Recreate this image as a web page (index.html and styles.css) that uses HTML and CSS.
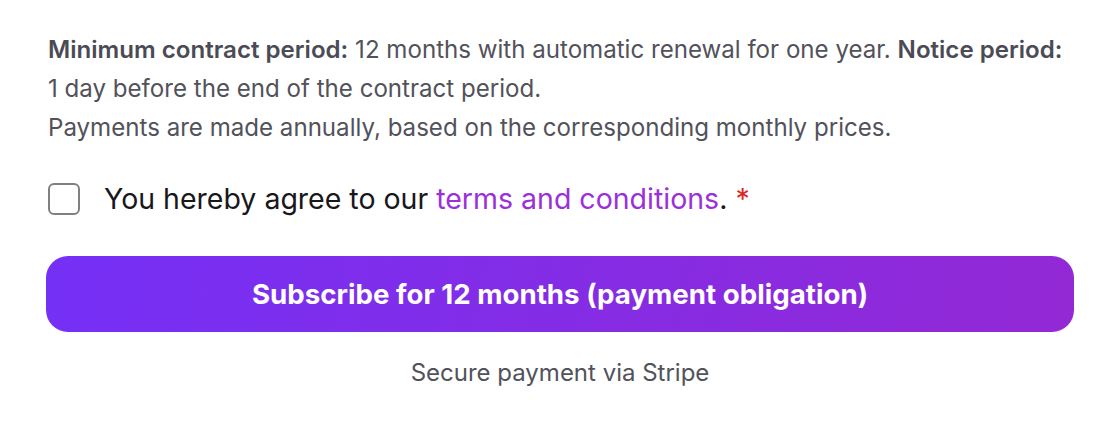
FILE: index.html
```html
<!DOCTYPE html>
<html lang="en">
<head>
    <meta charset="UTF-8">
    <meta name="viewport" content="width=device-width, initial-scale=1.0">
    <title>Subscribe</title>
    <link rel="stylesheet" href="styles.css">
</head>
<body>
    <div class="checkout">
        <div class="contract-info">
            <p><strong>Minimum contract period:</strong> 12 months with automatic renewal for one year. <strong>Notice period:</strong> 1 day before the end of the contract period.</p>
            <p>Payments are made annually, based on the corresponding monthly prices.</p>
        </div>

        <label class="agree">
            <input type="checkbox" class="agree-box">
            <span>You hereby agree to our <a href="#">terms and conditions</a>. <span class="required">*</span></span>
        </label>

        <button class="subscribe-btn">Subscribe for 12 months (payment obligation)</button>

        <p class="secure-note">Secure payment via Stripe</p>
    </div>
</body>
</html>
```

FILE: styles.css
```css
* {
    margin: 0;
    padding: 0;
    box-sizing: border-box;
}

body {
    font-family: 'Inter', 'Noto Sans', sans-serif;
    background-color: #fff;
    color: #52525b;
}

.checkout {
    width: 1028px;
    margin: 0 0 0 46px;
    padding-top: 30px;
    display: flex;
    flex-direction: column;
}

.contract-info {
    padding-left: 2px;
    font-size: 24.1px;
    line-height: 39px;
    color: #52525b;
}

.contract-info strong {
    font-weight: 600;
    color: #4b4b55;
}

.agree {
    display: flex;
    align-items: center;
    gap: 24px;
    margin-top: 34px;
    padding-left: 2px;
    font-size: 28.5px;
    color: #18181b;
    cursor: pointer;
}

.agree-box {
    appearance: none;
    width: 32px;
    height: 32px;
    border: 2px solid #808080;
    border-radius: 6px;
    background: #fff;
    flex-shrink: 0;
}

.agree a {
    color: #9b30d9;
    text-decoration: none;
}

.required {
    color: #dc2626;
}

.subscribe-btn {
    margin-top: 40px;
    height: 76px;
    border: none;
    border-radius: 22px;
    background: linear-gradient(100deg, #7530f6, #9329d5);
    color: #fff;
    font-family: inherit;
    font-size: 27.7px;
    font-weight: 700;
    cursor: pointer;
}

.secure-note {
    margin-top: 26px;
    text-align: center;
    font-size: 24px;
    color: #52525b;
}
```
